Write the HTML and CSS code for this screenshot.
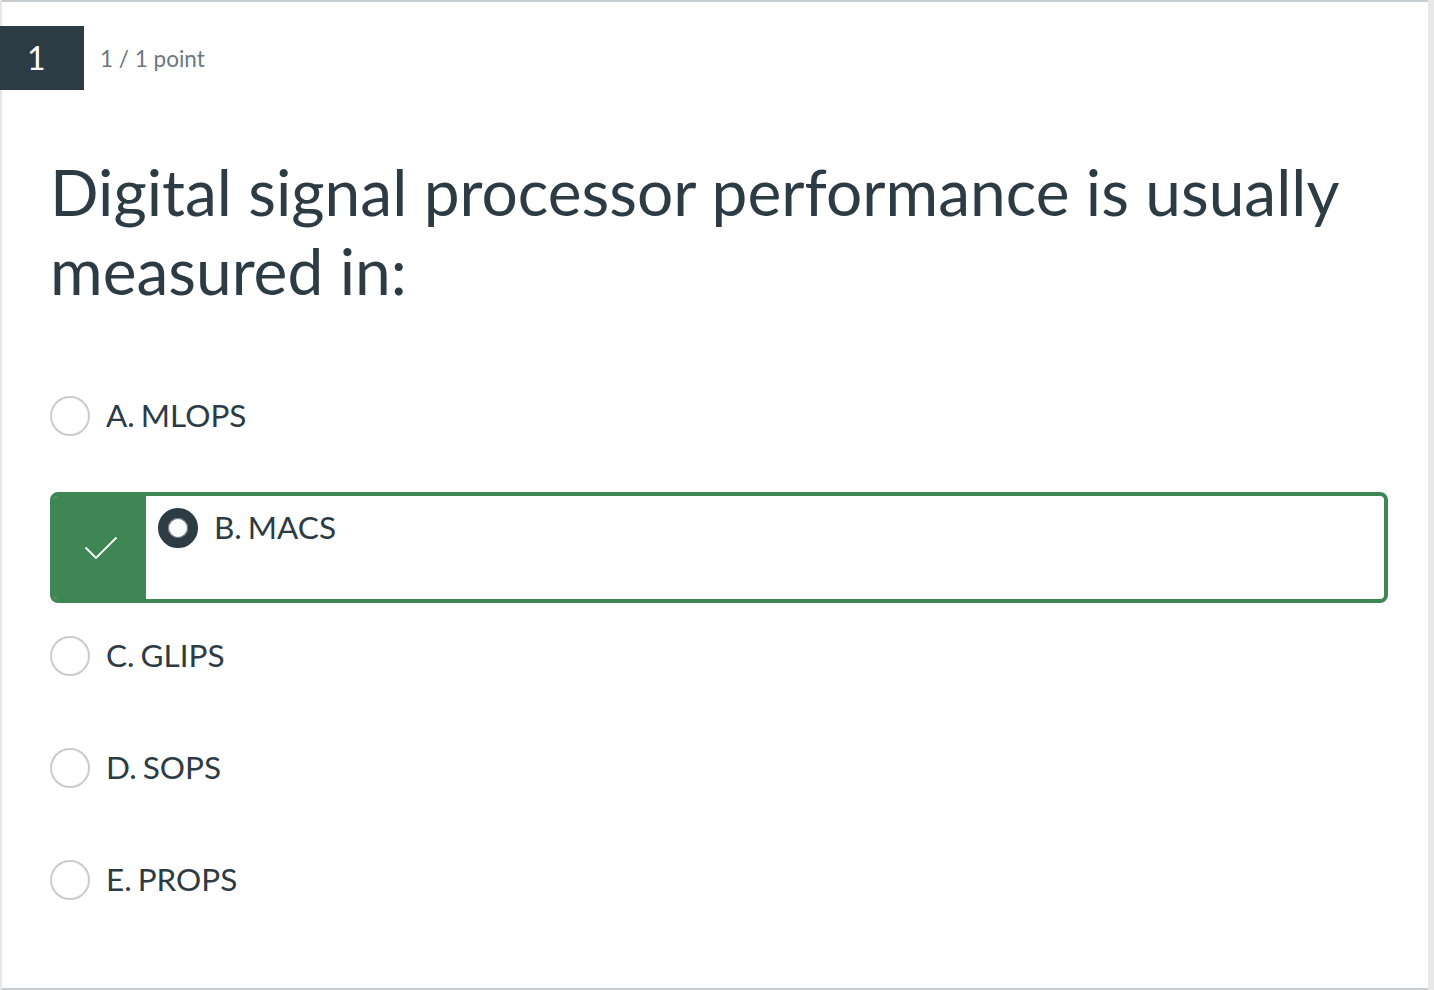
FILE: index.html
```html
<!DOCTYPE html>
<html lang="en">
<head>
<meta charset="utf-8">
<title>Quiz question</title>
<link rel="stylesheet" href="styles.css">
</head>
<body>
<div class="page">
  <div class="card">
    <div class="q-header">
      <div class="q-number">1</div>
      <div class="q-points">1 / 1 point</div>
    </div>
    <div class="q-body">
      <h1 class="q-text">Digital signal processor performance is usually measured in:</h1>
      <div class="options">
        <div class="option">
          <span class="radio"></span>
          <span class="label">A. MLOPS</span>
        </div>
        <div class="option-selected">
          <div class="correct-flag">
            <svg width="34" height="24" viewBox="0 0 34 24" aria-hidden="true">
              <path d="M1.5 11.5 L12 22 L32.5 1.5" fill="none" stroke="#ffffff" stroke-width="1.8"/>
            </svg>
          </div>
          <div class="selected-inner">
            <span class="radio radio-checked"></span>
            <span class="label">B. MACS</span>
          </div>
        </div>
        <div class="option">
          <span class="radio"></span>
          <span class="label">C. GLIPS</span>
        </div>
        <div class="option">
          <span class="radio"></span>
          <span class="label">D. SOPS</span>
        </div>
        <div class="option">
          <span class="radio"></span>
          <span class="label">E. PROPS</span>
        </div>
      </div>
    </div>
  </div>
</div>
</body>
</html>
```

FILE: styles.css
```css
html, body {
  margin: 0;
  padding: 0;
}
body {
  background: #e8e8e8;
  font-family: Lato, "Open Sans", "Liberation Sans", sans-serif;
  color: #2d3b45;
}
.page {
  padding: 0 6px 0 2px;
  height: 990px;
  box-sizing: border-box;
}
.card {
  background: #ffffff;
  border-top: 2px solid #c7cdd1;
  border-bottom: 2px solid #c7cdd1;
  height: 990px;
  box-sizing: border-box;
  padding-top: 24px;
}
.q-header {
  display: flex;
  align-items: center;
  height: 64px;
  margin-left: -2px;
}
.q-number {
  width: 84px;
  height: 64px;
  box-sizing: border-box;
  background: #2d3b45;
  color: #ffffff;
  font-size: 32px;
  line-height: 64px;
  padding-left: 27px;
}
.q-points {
  margin-left: 16px;
  font-size: 22.5px;
  line-height: 1.2;
  color: #6b7780;
}
.q-body {
  padding: 0 40px 0 48px;
}
.q-text {
  margin: 62px 0 0 0;
  font-weight: 400;
  font-size: 64px;
  line-height: 79px;
  color: #2d3b45;
}
.options {
  margin-top: 70px;
}
.option {
  display: flex;
  align-items: flex-start;
  height: 112px;
  box-sizing: border-box;
  padding-top: 16px;
}
.radio {
  flex: none;
  width: 40px;
  height: 40px;
  box-sizing: border-box;
  border: 2px solid #c7cdd1;
  border-radius: 50%;
  background: #ffffff;
}
.radio-checked {
  border: 10px solid #2d3b45;
  box-shadow: inset 0 0 0 1px #6b7780;
}
.label {
  margin-left: 16px;
  font-size: 31.5px;
  line-height: 39px;
  color: #2d3b45;
  word-spacing: -2px;
}
.option-selected {
  display: flex;
  height: 111px;
  box-sizing: border-box;
  border: 4px solid #3e8654;
  border-radius: 8px;
  margin-bottom: 17px;
  overflow: hidden;
}
.correct-flag {
  flex: none;
  width: 92px;
  background: #3e8654;
  display: flex;
  align-items: center;
  justify-content: center;
}
.correct-flag svg {
  display: block;
  margin-left: 2px;
}
.selected-inner {
  display: flex;
  align-items: flex-start;
  padding: 12px 0 0 12px;
}
```
